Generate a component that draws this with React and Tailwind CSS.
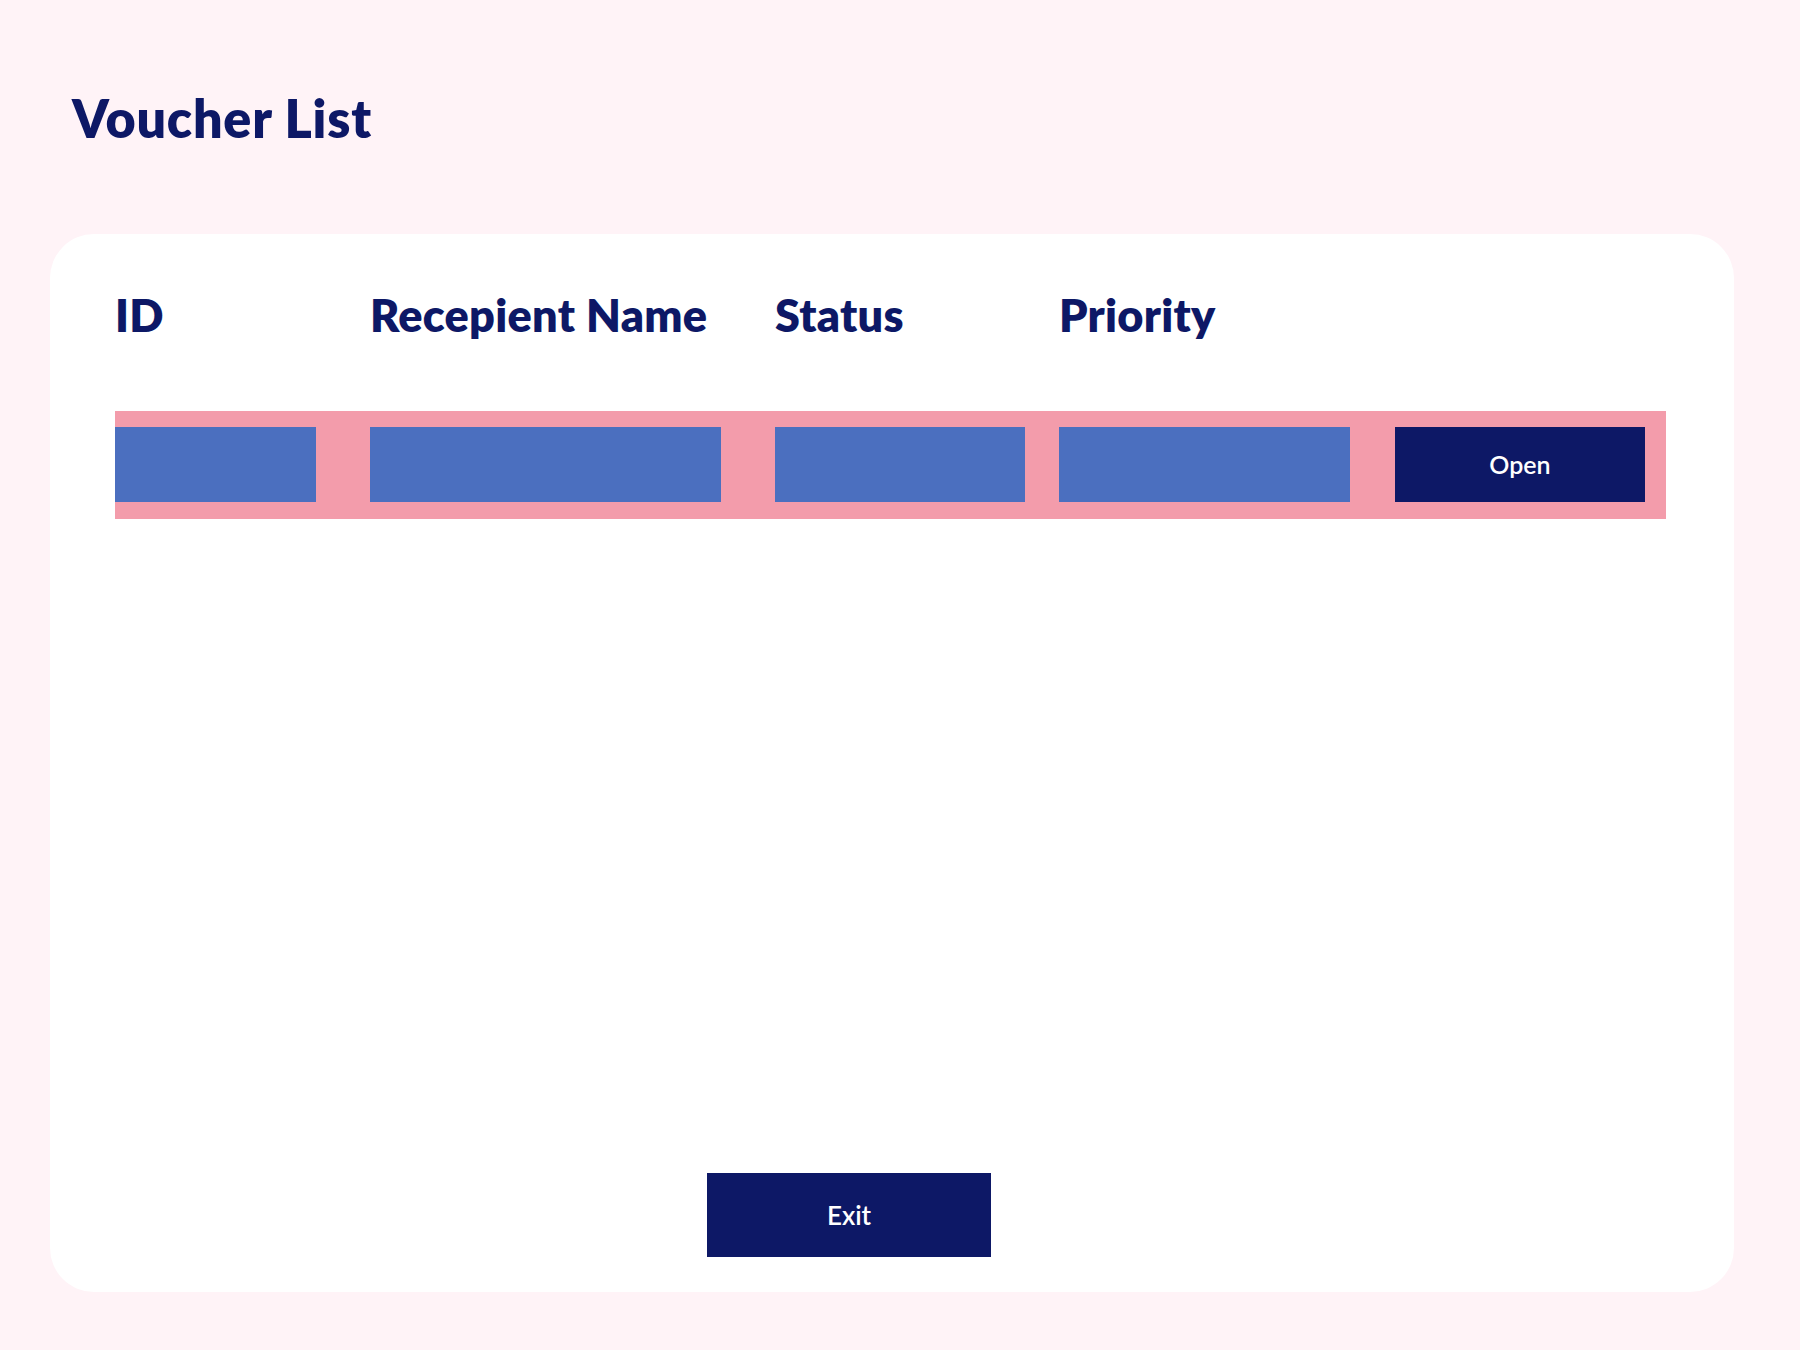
import React from "react";

/* ================== DATA ================== */
const columns = [
  { label: "ID", width: "w-[255px]" },
  { label: "Recepient Name", width: "w-[405px]" },
  { label: "Status", width: "w-[284px]" },
  { label: "Priority", width: "w-[300px]" },
];

/* ================== UI ================== */
function NavyButton({ children, className = "" }) {
  return (
    <button
      className={`bg-[#0d1866] text-white flex items-center justify-center font-semibold ${className}`}
    >
      {children}
    </button>
  );
}

/* ================== APP ================== */
export default function App() {
  return (
    <div
      className="min-h-screen bg-[#fff3f7] pt-[92px] pl-[50px] pr-[66px] pb-[58px]"
      style={{ fontFamily: "Lato, 'Noto Sans', sans-serif" }}
    >
      <h1 className="ml-[22px] text-[52px] leading-none font-extrabold text-[#0d1866] tracking-[0.015em]">
        Voucher List
      </h1>

      <div className="mt-[90px] h-[1058px] bg-white rounded-[44px] flex flex-col pt-[59px] pl-[65px] pr-[68px] pb-[35px]">
        {/* header row */}
        <div className="flex">
          {columns.map((c) => (
            <div
              key={c.label}
              className={`${c.width} shrink-0 text-[45px] leading-none font-extrabold text-[#0d1866] tracking-[0.006em] whitespace-nowrap`}
            >
              {c.label}
            </div>
          ))}
        </div>

        {/* voucher row */}
        <div className="mt-[73px] flex items-start bg-[#f39cab] pt-4 pb-[17px] pr-[22px]">
          <div className="w-[201px] h-[75px] mr-[54px] bg-[#4b6fbf] shrink-0" />
          <div className="w-[351px] h-[75px] mr-[54px] bg-[#4b6fbf] shrink-0" />
          <div className="w-[250px] h-[75px] mr-[34px] bg-[#4b6fbf] shrink-0" />
          <div className="w-[291px] h-[75px] mr-[45px] bg-[#4b6fbf] shrink-0" />
          <NavyButton className="w-[250px] h-[75px] text-[25px] shrink-0">
            Open
          </NavyButton>
        </div>

        <div className="flex-1" />

        <div className="flex">
          <NavyButton className="ml-[592px] w-[284px] h-[84px] text-[26px]">
            Exit
          </NavyButton>
        </div>
      </div>
    </div>
  );
}
